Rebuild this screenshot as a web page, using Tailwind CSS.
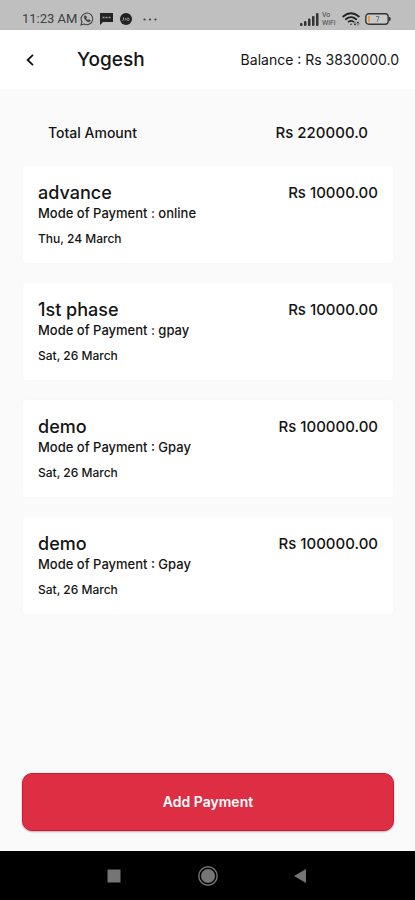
<!DOCTYPE html>
<html lang="en">
<head>
	<meta charset="UTF-8" />
	<meta name="viewport" content="width=device-width, initial-scale=1.0" />
	<title>Yogesh - Payments</title>
	<script src="https://cdn.jsdelivr.net/npm/@tailwindcss/browser@4"></script>
</head>
<body class="min-h-screen flex flex-col bg-[#fafafa] text-[#141414] font-['Inter',sans-serif]">
	<!-- Status bar -->
	<div class="h-[30px] pt-2 pl-[22px] pr-6 flex items-center justify-between bg-[#bfbfbf] text-[#404040]">
		<div class="flex items-center">
			<span class="font-['Roboto',sans-serif] text-[13px] leading-4">11:23 AM</span>
			<svg class="ml-[3px] w-[14px] h-[14px]" viewBox="0 0 14 14" fill="none" stroke="currentColor">
				<path d="M1 13l.9-3.2A5.8 5.8 0 1 1 4.2 12z" stroke-width="1.1" />
				<path d="M4.8 3.8c-1.7 1.3.8 5.6 4 6 1 .1 1.8-1 1.3-1.5L8.8 7.5l-.8.8C7 7.900 6.300 7.200 5.900 6.200l.7-.8-.7-1.500z" stroke-width="0.6" fill="currentColor" />
			</svg>
			<svg class="ml-[6px] w-[13px] h-[12px] text-[#222]" viewBox="0 0 13 12">
				<path d="M0 0h13v9H3l-3 3z" fill="currentColor" />
				<path d="M2.500 4.500h2M5.500 4.500h2M8.500 4.500h2" stroke="#a0a0a0" stroke-width="1.500" />
			</svg>
			<svg class="ml-[7px] w-3 h-3 text-[#222]" viewBox="0 0 12 12">
				<circle cx="6" cy="6" r="6" fill="currentColor" />
				<path d="M3.500 4.300v2.400q0 .9-1.200.8M5.300 5v2.500" stroke="#a0a0a0" stroke-width="0.900" fill="none" />
				<circle cx="8" cy="6.300" r="1.200" stroke="#a0a0a0" stroke-width="0.900" fill="none" />
			</svg>
			<svg class="ml-[11px] w-[14px] h-[3px]" viewBox="0 0 14 3" fill="currentColor">
				<circle cx="1.500" cy="1.500" r="1.100" /><circle cx="7" cy="1.500" r="1.100" /><circle cx="12.500" cy="1.500" r="1.100" />
			</svg>
		</div>
		<div class="flex items-center">
			<svg class="w-[19px] h-[13px]" viewBox="0 0 19 13" fill="#333">
				<rect x="0" y="10" width="2.500" height="3" rx="1" />
				<rect x="4" y="8" width="2.500" height="5" rx="1" />
				<rect x="8" y="5.500" width="2.500" height="7.500" rx="1" />
				<rect x="12" y="3" width="2.500" height="10" rx="1" />
				<rect x="16" y="0" width="2.500" height="13" rx="1" />
			</svg>
			<div class="ml-[3px] w-4 font-['Roboto',sans-serif] text-[7px] leading-2 text-[#444]">
				<div>Vo</div>
				<div>WiFi</div>
			</div>
			<svg class="ml-1 w-[18px] h-[14px]" viewBox="0 0 18 14" fill="none" stroke="#222" stroke-linecap="round">
				<path d="M1.200 4.500Q9-2 16.800 4.500" stroke-width="1.800" />
				<path d="M3.800 7.200Q9 3 14.200 7.200" stroke-width="1.800" />
				<path d="M6.500 9.700Q9 8 11.500 9.700" stroke-width="1.600" />
				<circle cx="9" cy="12.200" r="0.800" fill="#222" stroke="none" />
				<path d="M13 10v3M12 12l1 1 1-1M16 13v-3M15 11l1-1 1 1" stroke-width="0.700" />
			</svg>
			<svg class="ml-[5px] w-[26px] h-[12px]" viewBox="0 0 26 12">
				<rect x="0.800" y="0.800" width="22.400" height="10.400" rx="3" fill="#cacaca" stroke="#333" stroke-width="1.400" />
				<path d="M3 3h2v6H3z" fill="#f09a40" />
				<path d="M11 3.500h3L12.200 8.700" fill="none" stroke="#777" stroke-width="1" />
				<path d="M24 4q1.800 0 1.800 2T24 8z" fill="#333" />
			</svg>
		</div>
	</div>

	<!-- App bar -->
	<header class="h-[59px] pl-[18px] pr-4 flex items-center bg-white">
		<button type="button" aria-label="Back" class="w-6 h-6 flex items-center justify-center">
			<svg class="w-2 h-3" viewBox="0 0 8 12" fill="none" stroke="#111" stroke-width="1.800">
				<path d="M7 .8L1.600 6 7 11.200" />
			</svg>
		</button>
		<h1 class="ml-[35px] text-[19px] leading-6 font-medium">Yogesh</h1>
		<p class="ml-auto text-sm leading-5">Balance : Rs 3830000.0</p>
	</header>

	<main class="flex-1 flex flex-col pl-[22px] pr-[21px] pb-5">
		<div class="mt-[34px] px-[26px] flex justify-between leading-5 font-medium">
			<span class="text-sm leading-5">Total Amount</span>
			<span class="text-[15px]">Rs 220000.0</span>
		</div>

		<!-- Payments -->
		<ul class="mt-[23px] px-px flex flex-col gap-5">
			<li class="px-[15px] pt-[15px] pb-4 rounded-sm bg-white shadow-[0_0_2px_rgba(0,0,0,0.04)]">
				<div class="flex justify-between leading-6 font-medium">
					<h2 class="text-lg leading-6">advance</h2>
					<span class="text-[15px]">Rs 10000.00</span>
				</div>
				<p class="text-[13px] leading-4 font-medium">Mode of Payment : online</p>
				<p class="mt-[10px] text-xs leading-4 font-medium">Thu, 24 March</p>
			</li>
			<li class="px-[15px] pt-[15px] pb-4 rounded-sm bg-white shadow-[0_0_2px_rgba(0,0,0,0.04)]">
				<div class="flex justify-between leading-6 font-medium">
					<h2 class="text-lg leading-6">1st phase</h2>
					<span class="text-[15px]">Rs 10000.00</span>
				</div>
				<p class="text-[13px] leading-4 font-medium">Mode of Payment : gpay</p>
				<p class="mt-[10px] text-xs leading-4 font-medium">Sat, 26 March</p>
			</li>
			<li class="px-[15px] pt-[15px] pb-4 rounded-sm bg-white shadow-[0_0_2px_rgba(0,0,0,0.04)]">
				<div class="flex justify-between leading-6 font-medium">
					<h2 class="text-lg leading-6">demo</h2>
					<span class="text-[15px]">Rs 100000.00</span>
				</div>
				<p class="text-[13px] leading-4 font-medium">Mode of Payment : Gpay</p>
				<p class="mt-[10px] text-xs leading-4 font-medium">Sat, 26 March</p>
			</li>
			<li class="px-[15px] pt-[15px] pb-4 rounded-sm bg-white shadow-[0_0_2px_rgba(0,0,0,0.04)]">
				<div class="flex justify-between leading-6 font-medium">
					<h2 class="text-lg leading-6">demo</h2>
					<span class="text-[15px]">Rs 100000.00</span>
				</div>
				<p class="text-[13px] leading-4 font-medium">Mode of Payment : Gpay</p>
				<p class="mt-[10px] text-xs leading-4 font-medium">Sat, 26 March</p>
			</li>
		</ul>

		<button type="button" class="mt-auto h-[58px] w-full rounded-[10px] border border-[#d3173a] bg-[#de2e44] text-white text-sm leading-5 font-semibold shadow-[0_1px_2px_rgba(0,0,0,0.3)]">Add Payment</button>
	</main>

	<!-- System navigation -->
	<nav class="h-[49px] grid grid-cols-[1fr_auto_1fr] items-center gap-[72px] bg-black text-[#757575]">
		<button type="button" aria-label="Recent apps" class="justify-self-end w-6 h-6 flex items-center justify-center">
			<svg class="w-[14px] h-[14px]" viewBox="0 0 14 14"><rect x="0.500" y="0.500" width="13" height="13" rx="0.500" fill="currentColor" /></svg>
		</button>
		<button type="button" aria-label="Home" class="w-5 h-5">
			<svg class="w-5 h-5" viewBox="0 0 20 20">
				<circle cx="10" cy="10" r="9.200" fill="none" stroke="currentColor" stroke-width="1.400" />
				<circle cx="10" cy="10" r="7" fill="currentColor" />
			</svg>
		</button>
		<button type="button" aria-label="Back" class="ml-[-2px] w-6 h-6 flex items-center justify-center">
			<svg class="w-3 h-[14px]" viewBox="0 0 12 14"><path d="M12 0v14L0 7z" fill="currentColor" /></svg>
		</button>
	</nav>
</body>
</html>
